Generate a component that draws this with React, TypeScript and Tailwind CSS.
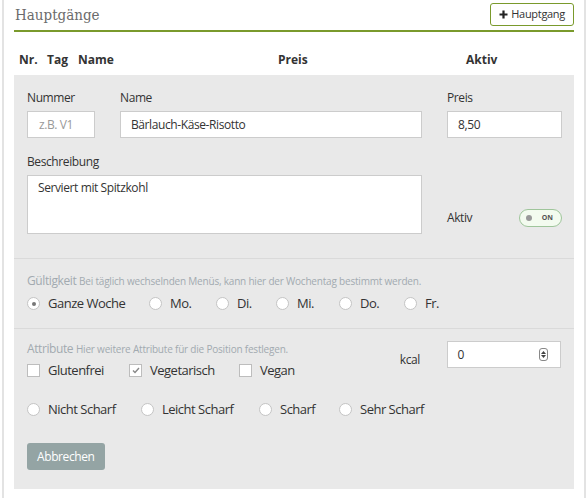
import React from 'react';

const Radio = ({ checked = false }: { checked?: boolean }) => (
  <span className="w-[13px] h-[13px] rounded-full bg-white border border-[#c4c4c4] flex items-center justify-center shrink-0">
    {checked && <span className="w-[4px] h-[4px] rounded-full bg-[#777]" />}
  </span>
);

const Checkbox = ({ checked = false }: { checked?: boolean }) => (
  <span className="w-[13px] h-[13px] bg-white border border-[#bdbdbd] flex items-center justify-center shrink-0">
    {checked && (
      <svg width="8" height="7" viewBox="0 0 8 7">
        <path d="M1 3.6 L3 5.5 L7 1" fill="none" stroke="#888" strokeWidth="1.4" />
      </svg>
    )}
  </span>
);

const days = [
  { label: 'Ganze Woche', checked: true, w: 'w-[122px]' },
  { label: 'Mo.', w: 'w-[67px]' },
  { label: 'Di.', w: 'w-[60px]' },
  { label: 'Mi.', w: 'w-[63px]' },
  { label: 'Do.', w: 'w-[65px]' },
  { label: 'Fr.', w: 'w-[60px]' },
];

const spice = [
  { label: 'Nicht Scharf', w: 'w-[114px]' },
  { label: 'Leicht Scharf', w: 'w-[118px]' },
  { label: 'Scharf', w: 'w-[80px]' },
  { label: 'Sehr Scharf', w: 'w-[100px]' },
];

export default function App() {
  return (
    <div className="w-[588px] h-[498px] bg-white overflow-hidden font-['Open_Sans',sans-serif] text-[#333]">
      <div className="ml-[2px] w-[584px] h-[520px] border-x-2 border-[#e3e3e3] px-[10px]">
        {/* Header */}
        <div className="h-[32px] border-b-2 border-[#7a9a2c] flex items-end justify-between relative">
          <h2 className="font-['DejaVu_Serif',serif] font-stretch-condensed text-[15px] text-[#6b6b6b] leading-none mb-[7px] ml-[1px]">Hauptgänge</h2>
          <button className="absolute right-0 top-[3px] h-[23px] px-[8px] border border-[#7a9a2c] rounded-[3px] bg-white flex items-center gap-[3px] text-[11px] tracking-[-0.3px] text-[#333]">
            <svg width="9" height="9" viewBox="0 0 9 9">
              <path d="M4.5 0.5 V8.5 M0.5 4.5 H8.5" stroke="#222" strokeWidth="2.2" />
            </svg>
            Hauptgang
          </button>
        </div>

        {/* Table header */}
        <div className="h-[43px] flex items-end pb-[6px] text-[12px] font-bold text-[#333]">
          <span className="ml-[5px] w-[28px]">Nr.</span>
          <span className="w-[31px]">Tag</span>
          <span className="w-[200px]">Name</span>
          <span className="w-[188px]">Preis</span>
          <span>Aktiv</span>
        </div>

        {/* Edit panel */}
        <div className="bg-[#e9e9e9] h-[414px] text-[12px] tracking-[-0.4px]">
          <div className="px-[13px] pt-[14px] pb-[24px] border-b border-[#dadada] grid grid-cols-[68px_302px_115px] gap-x-[25px]">
            <div>
              <div className="leading-[18px] mb-[4px]">Nummer</div>
              <div className="h-[27px] bg-white border border-[#ccc] px-[11px] flex items-center text-[#999]">z.B. V1</div>
            </div>
            <div>
              <div className="leading-[18px] mb-[4px]">Name</div>
              <div className="h-[27px] bg-white border border-[#ccc] px-[10px] flex items-center">Bärlauch-Käse-Risotto</div>
            </div>
            <div>
              <div className="leading-[18px] mb-[4px]">Preis</div>
              <div className="h-[27px] bg-white border border-[#ccc] px-[10px] flex items-center">8,50</div>
            </div>
            <div className="col-span-2 mt-[15px]">
              <div className="leading-[18px] mb-[4px]">Beschreibung</div>
              <div className="h-[59px] bg-white border border-[#ccc] px-[10px] pt-[3px]">Serviert mit Spitzkohl</div>
            </div>
            <div className="flex items-end justify-between pb-[7px]">
              <span>Aktiv</span>
              <span className="w-[43px] h-[18px] rounded-full border border-[#9fc59b] bg-[#f3fbef] flex items-center justify-between pl-[6px] pr-[8px] tracking-normal">
                <span className="w-[6px] h-[6px] rounded-full bg-[#999]" />
                <span className="text-[7px] font-bold text-[#555]">ON</span>
              </span>
            </div>
          </div>

          {/* Gültigkeit */}
          <div className="px-[13px] pt-[14px] h-[70px] border-b border-[#dadada]">
            <div className="text-[#a2aab0] leading-[16px] whitespace-nowrap">
              <span>Gültigkeit</span>{' '}
              <span className="text-[10px] tracking-[-0.2px]">Bei täglich wechselnden Menüs, kann hier der Wochentag bestimmt werden.</span>
            </div>
            <div className="flex items-center mt-[5px] text-[13px] tracking-[-0.5px]">
              {days.map((d) => (
                <div key={d.label} className={`${d.w} flex items-center gap-[8px] whitespace-nowrap`}>
                  <Radio checked={d.checked} />
                  <span>{d.label}</span>
                </div>
              ))}
            </div>
          </div>

          {/* Attribute */}
          <div className="px-[13px] pt-[12px]">
            <div className="flex">
              <div className="w-[375px]">
                <div className="text-[#a2aab0] leading-[16px] whitespace-nowrap">
                  <span>Attribute</span>{' '}
                  <span className="text-[10px] tracking-[-0.2px]">Hier weitere Attribute für die Position festlegen.</span>
                </div>
                <div className="flex items-center mt-[4px] text-[13px] tracking-[-0.5px]">
                  <div className="w-[102px] flex items-center gap-[8px]"><Checkbox /><span>Glutenfrei</span></div>
                  <div className="w-[110px] flex items-center gap-[8px]"><Checkbox checked /><span>Vegetarisch</span></div>
                  <div className="flex items-center gap-[8px]"><Checkbox /><span>Vegan</span></div>
                </div>
              </div>
              <div className="w-[47px] pt-[10px]">kcal</div>
              <div className="w-[115px] h-[27px] bg-white border border-[#ccc] px-[10px] flex items-center justify-between">
                <span>0</span>
                <span className="w-[9px] h-[13px] rounded-[3px] border border-[#888] flex flex-col items-center justify-center gap-[1px] mr-[2px]">
                  <svg width="5" height="3" viewBox="0 0 5 3"><path d="M2.5 0 L5 3 H0 Z" fill="#444" /></svg>
                  <svg width="5" height="3" viewBox="0 0 5 3"><path d="M0 0 H5 L2.5 3 Z" fill="#444" /></svg>
                </span>
              </div>
            </div>
            <div className="flex items-center mt-[19px] text-[13px] tracking-[-0.5px]">
              {spice.map((s) => (
                <div key={s.label} className={`${s.w} flex items-center gap-[8px] whitespace-nowrap`}>
                  <Radio />
                  <span>{s.label}</span>
                </div>
              ))}
            </div>
            <button className="mt-[24px] h-[27px] px-[10px] rounded-[3px] bg-[#94a4a4] text-white">Abbrechen</button>
          </div>
        </div>
      </div>
    </div>
  );
}
